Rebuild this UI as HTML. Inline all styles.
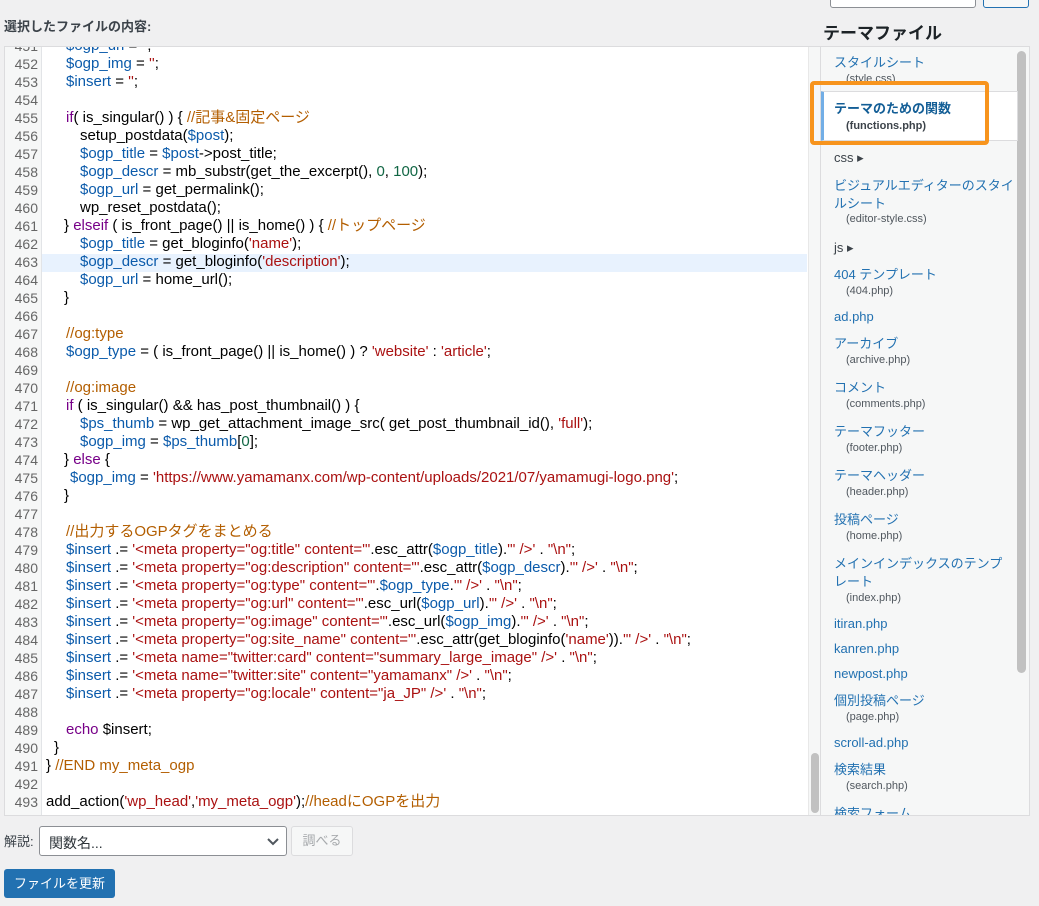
<!DOCTYPE html>
<html><head><meta charset="utf-8"><style>
body{margin:0;width:1039px;height:906px;background:#f0f0f1;font-family:"Liberation Sans","Noto Sans CJK JP",sans-serif;position:relative;overflow:hidden;color:#1d2327}
.abs{position:absolute;white-space:nowrap}
#ed{position:absolute;left:4px;top:46px;width:824px;height:768px;background:#fff;border:1px solid #dcdcde;overflow:hidden}
#gut{position:absolute;left:0;top:0;width:36px;height:100%;background:#f6f7f7;border-right:1px solid #e2e4e7}
.ln{position:absolute;left:0;width:33px;text-align:right;font-size:14px;color:#666;line-height:18px}
.cl{position:absolute;left:41px;font-size:15px;line-height:18px;color:#000;white-space:pre}
.v{color:#0b5bab}.s{color:#a11}.c{color:#b35e00}.k{color:#708}.n{color:#164}
#side{position:absolute;left:820px;top:46px;width:208px;height:768px;background:#f6f7f7;border:1px solid #dcdcde;overflow:hidden}
.a{position:absolute;left:13px;font-size:13px;color:#2271b1;white-space:nowrap}
.f{position:absolute;left:25px;font-size:11px;color:#50575e;white-space:nowrap}
.d{position:absolute;left:13px;font-size:13px;color:#3c434a}
</style></head><body>
<div class="abs" style="left:830px;top:-6px;width:144px;height:12px;border:1px solid #8c8f94;border-radius:3px;background:#fff"></div>
<div class="abs" style="left:983px;top:-6px;width:44px;height:12px;border:1px solid #2271b1;border-radius:3px;background:#f6f7f7"></div>
<div class="abs" style="left:4px;top:16px;font-size:13px;font-weight:bold;color:#3c434a">選択したファイルの内容:</div>
<div class="abs" style="left:823px;top:19px;font-size:17px;font-weight:bold">テーマファイル</div>
<div id="ed"><div id="gut"></div>
<div style="position:absolute;left:37px;top:207px;width:765px;height:18px;background:#e8f2fe"></div>
<div style="position:absolute;left:803px;top:0;width:15px;height:100%;background:#f6f7f7;border-left:1px solid #e8e8e8"></div>
<div style="position:absolute;left:806px;top:706px;width:8px;height:60px;background:#c1c1c1;border-radius:4px"></div>
<div id="code"></div>
</div>
<div id="side">
<div style="position:absolute;left:196px;top:4px;width:9px;height:622px;background:#c1c1c1;border-radius:5px"></div>
<div class="a" style="top:5px">スタイルシート</div><div class="f" style="top:26px">(style.css)</div>
<div style="position:absolute;left:-1px;top:44px;width:193px;height:48px;background:#fff;border:1px solid #dcdcde;border-left:4px solid #72aee6"></div>
<div class="a" style="top:51px;font-weight:bold;color:#135e96">テーマのための関数</div><div class="f" style="top:73px;font-weight:bold;color:#3c434a">(functions.php)</div>
<div class="d" style="top:103px">css ▸</div>
<div class="a" style="top:128px">ビジュアルエディターのスタイ</div><div class="a" style="top:146px">ルシート</div><div class="f" style="top:166px">(editor-style.css)</div>
<div class="d" style="top:193px">js ▸</div>
<div class="a" style="top:217px">404 テンプレート</div><div class="f" style="top:238px">(404.php)</div>
<div class="a" style="top:262px">ad.php</div>
<div class="a" style="top:286px">アーカイブ</div><div class="f" style="top:307px">(archive.php)</div>
<div class="a" style="top:330px">コメント</div><div class="f" style="top:351px">(comments.php)</div>
<div class="a" style="top:374px">テーマフッター</div><div class="f" style="top:395px">(footer.php)</div>
<div class="a" style="top:418px">テーマヘッダー</div><div class="f" style="top:439px">(header.php)</div>
<div class="a" style="top:462px">投稿ページ</div><div class="f" style="top:483px">(home.php)</div>
<div class="a" style="top:506px">メインインデックスのテンプ</div><div class="a" style="top:524px">レート</div><div class="f" style="top:545px">(index.php)</div>
<div class="a" style="top:569px">itiran.php</div>
<div class="a" style="top:594px">kanren.php</div>
<div class="a" style="top:619px">newpost.php</div>
<div class="a" style="top:643px">個別投稿ページ</div><div class="f" style="top:664px">(page.php)</div>
<div class="a" style="top:688px">scroll-ad.php</div>
<div class="a" style="top:712px">検索結果</div><div class="f" style="top:733px">(search.php)</div>
<div class="a" style="top:756px">検索フォーム</div>
</div>
<div class="abs" style="left:810px;top:81px;width:171px;height:56px;border:4px solid #f7941d;border-radius:4px"></div>
<div class="abs" style="left:4px;top:831px;font-size:13px;color:#3c434a">解説:</div>
<div class="abs" style="left:39px;top:826px;width:246px;height:28px;border:1px solid #8c8f94;border-radius:3px;background:#fff"><span style="position:absolute;left:9px;top:6px;font-size:14px;color:#2c3338">関数名...</span><svg style="position:absolute;left:226px;top:10px" width="14" height="9" viewBox="0 0 14 9"><path d="M2 2l5 5 5-5" fill="none" stroke="#50575e" stroke-width="2"/></svg></div>
<div class="abs" style="left:291px;top:826px;width:60px;height:28px;border:1px solid #dcdcde;border-radius:3px;background:#f6f7f7;color:#a7aaad;font-size:13px;text-align:center;line-height:28px">調べる</div>
<div class="abs" style="left:4px;top:869px;width:111px;height:29px;background:#2271b1;border-radius:3px;color:#fff;font-size:13px;text-align:center;line-height:29px">ファイルを更新</div>
<script>
var L=[
[451,20,'<span class="v">$ogp_url</span> = \'\';'],
[452,20,'<span class="v">$ogp_img</span> = <span class="s">\'\'</span>;'],
[453,20,'<span class="v">$insert</span> = <span class="s">\'\'</span>;'],
[454,0,''],
[455,20,'<span class="k">if</span>( is_singular() ) { <span class="c">//記事&amp;固定ページ</span>'],
[456,34,'setup_postdata(<span class="v">$post</span>);'],
[457,34,'<span class="v">$ogp_title</span> = <span class="v">$post</span>->post_title;'],
[458,34,'<span class="v">$ogp_descr</span> = mb_substr(get_the_excerpt(), <span class="n">0</span>, <span class="n">100</span>);'],
[459,34,'<span class="v">$ogp_url</span> = get_permalink();'],
[460,34,'wp_reset_postdata();'],
[461,18,'} <span class="k">elseif</span> ( is_front_page() || is_home() ) { <span class="c">//トップページ</span>'],
[462,34,'<span class="v">$ogp_title</span> = get_bloginfo(<span class="s">\'name\'</span>);'],
[463,34,'<span class="v">$ogp_descr</span> = get_bloginfo(<span class="s">\'description\'</span>);'],
[464,34,'<span class="v">$ogp_url</span> = home_url();'],
[465,18,'}'],
[466,0,''],
[467,20,'<span class="c">//og:type</span>'],
[468,20,'<span class="v">$ogp_type</span> = ( is_front_page() || is_home() ) ? <span class="s">\'website\'</span> : <span class="s">\'article\'</span>;'],
[469,0,''],
[470,20,'<span class="c">//og:image</span>'],
[471,20,'<span class="k">if</span> ( is_singular() &amp;&amp; has_post_thumbnail() ) {'],
[472,34,'<span class="v">$ps_thumb</span> = wp_get_attachment_image_src( get_post_thumbnail_id(), <span class="s">\'full\'</span>);'],
[473,34,'<span class="v">$ogp_img</span> = <span class="v">$ps_thumb</span>[<span class="n">0</span>];'],
[474,18,'} <span class="k">else</span> {'],
[475,24,'<span class="v">$ogp_img</span> = <span class="s">\'https://www.yamamanx.com/wp-content/uploads/2021/07/yamamugi-logo.png\'</span>;'],
[476,18,'}'],
[477,0,''],
[478,20,'<span class="c">//出力するOGPタグをまとめる</span>'],
[479,20,'<span class="v">$insert</span> .= <span class="s">\'&lt;meta property="og:title" content="\'</span>.esc_attr(<span class="v">$ogp_title</span>).<span class="s">\'" /&gt;\'</span> . <span class="s">"\\n"</span>;'],
[480,20,'<span class="v">$insert</span> .= <span class="s">\'&lt;meta property="og:description" content="\'</span>.esc_attr(<span class="v">$ogp_descr</span>).<span class="s">\'" /&gt;\'</span> . <span class="s">"\\n"</span>;'],
[481,20,'<span class="v">$insert</span> .= <span class="s">\'&lt;meta property="og:type" content="\'</span>.<span class="v">$ogp_type</span>.<span class="s">\'" /&gt;\'</span> . <span class="s">"\\n"</span>;'],
[482,20,'<span class="v">$insert</span> .= <span class="s">\'&lt;meta property="og:url" content="\'</span>.esc_url(<span class="v">$ogp_url</span>).<span class="s">\'" /&gt;\'</span> . <span class="s">"\\n"</span>;'],
[483,20,'<span class="v">$insert</span> .= <span class="s">\'&lt;meta property="og:image" content="\'</span>.esc_url(<span class="v">$ogp_img</span>).<span class="s">\'" /&gt;\'</span> . <span class="s">"\\n"</span>;'],
[484,20,'<span class="v">$insert</span> .= <span class="s">\'&lt;meta property="og:site_name" content="\'</span>.esc_attr(get_bloginfo(<span class="s">\'name\'</span>)).<span class="s">\'" /&gt;\'</span> . <span class="s">"\\n"</span>;'],
[485,20,'<span class="v">$insert</span> .= <span class="s">\'&lt;meta name="twitter:card" content="summary_large_image" /&gt;\'</span> . <span class="s">"\\n"</span>;'],
[486,20,'<span class="v">$insert</span> .= <span class="s">\'&lt;meta name="twitter:site" content="yamamanx" /&gt;\'</span> . <span class="s">"\\n"</span>;'],
[487,20,'<span class="v">$insert</span> .= <span class="s">\'&lt;meta property="og:locale" content="ja_JP" /&gt;\'</span> . <span class="s">"\\n"</span>;'],
[488,0,''],
[489,20,'<span class="k">echo</span> $insert;'],
[490,8,'}'],
[491,0,'} <span class="c">//END my_meta_ogp</span>'],
[492,0,''],
[493,0,'add_action(<span class="s">\'wp_head\'</span>,<span class="s">\'my_meta_ogp\'</span>);<span class="c">//headにOGPを出力</span>']
];
var h='';for(var i=0;i<L.length;i++){var t=-10+i*18;
h+='<div class="ln" style="top:'+t+'px">'+L[i][0]+'</div><div class="cl" style="top:'+t+'px;left:'+(41+L[i][1])+'px">'+L[i][2]+'</div>';}
document.getElementById('code').innerHTML=h;
</script>
</body></html>
